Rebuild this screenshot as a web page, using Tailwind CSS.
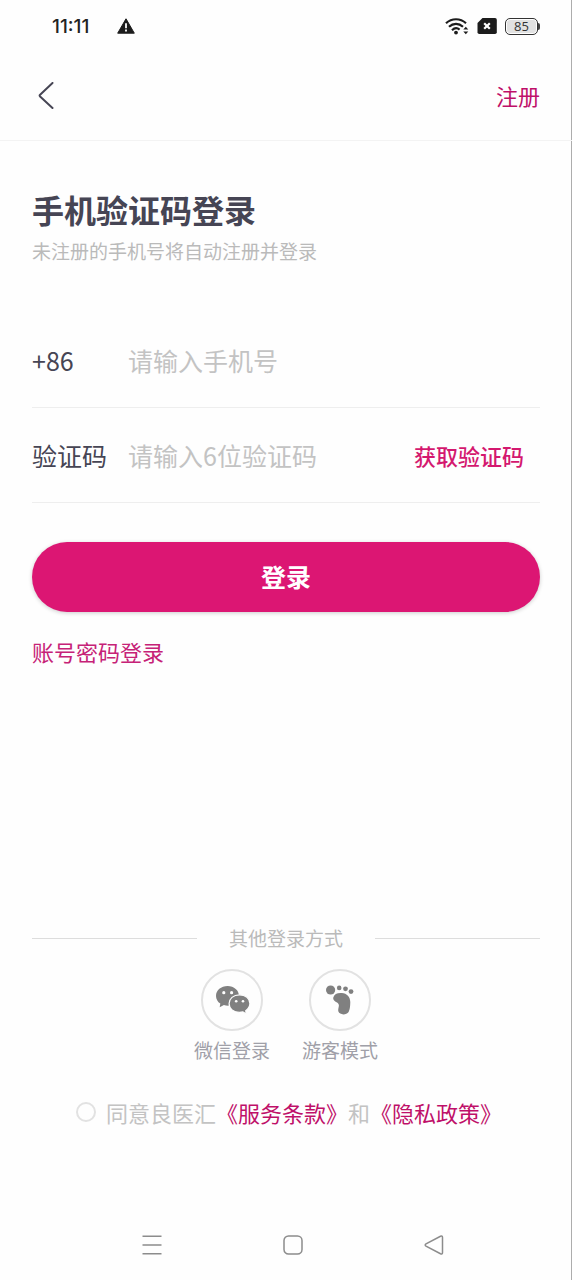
<!DOCTYPE html>
<html lang="zh-CN">
<head>
<meta charset="utf-8">
<meta name="viewport" content="width=device-width, initial-scale=1">
<title>手机验证码登录</title>
<script src="https://cdn.jsdelivr.net/npm/@tailwindcss/browser@4"></script>
</head>
<body class="flex min-h-screen flex-col bg-[#fefefe] font-['Noto_Sans_CJK_SC',sans-serif] text-[#464554] shadow-[inset_-1px_0_0_#adadad]">

  <!-- System status bar -->
  <div class="flex h-13 items-center justify-between pr-8 pl-13">
    <div class="flex items-center gap-7">
      <span class="pt-0.5 font-[Inter,sans-serif] text-[19px] leading-6 font-medium text-[#222222]">11:11</span>
      <svg class="h-4 w-[18px]" viewBox="0 0 18 16" role="img" aria-label="警告">
        <path d="M9 .8 17.3 15.2H.7Z" fill="#1c1c1c" stroke="#1c1c1c" stroke-linejoin="round"/>
        <path d="M9 5.2v5M9 11.6v1.8" stroke="#fff" stroke-width="1.8"/>
      </svg>
    </div>
    <div class="flex items-center gap-2">
      <svg class="h-[18px] w-6" viewBox="0 0 24 18" role="img" aria-label="Wi-Fi" fill="none" stroke="#1c1c1c" stroke-width="2.2">
        <path d="M1 6.2c5.800-5.300 14.200-5.300 20 0M4 9.800c4.200-3.900 9.800-3.900 14 0M7 13.200c2.400-2.300 5.200-2.500 7.600-.6"/>
        <circle cx="11" cy="15.600" r="1.900" fill="#1c1c1c" stroke="none"/>
        <path d="m18.300 12.500 2.500-2.800 2.500 2.800ZM18.300 14.500h5l-2.500 2.800Z" fill="#1c1c1c" stroke="none"/>
      </svg>
      <svg class="h-4 w-5" viewBox="0 0 20 16" role="img" aria-label="无 SIM 卡">
        <path d="M5.500 0H18a1.800 1.800 0 0 1 1.800 1.800v12.400A1.800 1.800 0 0 1 18 16H2.300A1.800 1.800 0 0 1 .5 14.200V5Z" fill="#1c1c1c"/>
        <path d="m7.200 5.200 5.600 5.600m0-5.600-5.600 5.600" stroke="#fff" stroke-width="2.200"/>
      </svg>
      <div class="flex items-center">
        <span class="flex h-[17px] w-[33px] items-center justify-center rounded-[5px] border border-[#333333] bg-[#e2e2e2] font-['Open_Sans',sans-serif] text-[13px] leading-none text-[#333333] ring-1 ring-white ring-inset">85</span>
        <span class="h-[7px] w-[2px] rounded-r-sm bg-[#444444]"></span>
      </div>
    </div>
  </div>

  <header class="flex h-[89px] items-center justify-between border-b border-[#f3f3f3] px-8">
    <button type="button" aria-label="返回" class="-ml-1 flex h-12 w-9 items-center justify-center">
      <svg class="h-7 w-5" viewBox="0 0 20 28" fill="none" stroke="#464554" stroke-width="2" stroke-linecap="round" stroke-linejoin="round"><path d="M16.500 1 4.100 12.700q-.9.900 0 1.800L16.500 26"/></svg>
    </button>
    <a href="#register" class="pb-0.5 text-[22px] leading-8 text-[#bf1069]">注册</a>
  </header>

  <main class="flex grow flex-col px-8 pt-12">
    <h1 class="text-[32px] leading-10 font-bold">手机验证码登录</h1>
    <p class="mt-1.5 text-[19px] leading-8 text-[#bababa]">未注册的手机号将自动注册并登录</p>

    <form class="mt-[46px]">
      <div class="flex h-[95px] items-center border-b border-[#eeeeee]">
        <label for="phone" class="w-24 shrink-0 text-[25px] leading-9">+86</label>
        <input id="phone" type="tel" placeholder="请输入手机号" class="h-12 min-w-0 grow bg-transparent text-[25px] outline-none placeholder:text-[#c3c3c3]">
      </div>
      <div class="flex h-[95px] items-center border-b border-[#eeeeee]">
        <label for="code" class="w-24 shrink-0 text-[25px] leading-9">验证码</label>
        <input id="code" type="text" inputmode="numeric" placeholder="请输入6位验证码" class="h-12 min-w-0 grow bg-transparent text-[25px] outline-none placeholder:text-[#c3c3c3]">
        <button type="button" class="shrink-0 px-4 text-[22px] leading-8 font-medium text-[#d4186f]">获取验证码</button>
      </div>
      <button type="submit" class="mt-[39px] flex h-[70px] w-full items-center justify-center rounded-full bg-[#dc1673] pb-0.5 text-[25px] leading-9 font-bold text-white shadow-[0_1px_4px_rgba(0,0,0,0.2)]">登录</button>
    </form>
    <a href="#password" class="mt-[23px] self-start text-[22px] leading-8 text-[#c62277]">账号密码登录</a>

    <section class="mt-auto">
      <div class="flex items-center gap-8">
        <span class="h-px grow bg-[#dddddd]"></span>
        <h2 class="text-[19px] leading-7 text-[#bababa]">其他登录方式</h2>
        <span class="h-px grow bg-[#dddddd]"></span>
      </div>
      <div class="mt-[17px] flex justify-center gap-8">
        <button type="button" class="flex flex-col items-center gap-[5px]">
          <span class="flex size-[62px] items-center justify-center rounded-full border-2 border-[#e2e2e2]">
            <svg class="h-[30px] w-9" viewBox="-1 0 36 30" fill="#808080">
              <path d="M12.600 1C6.100 1 1 5.300 1 10.900c0 3.200 1.700 5.900 4.300 7.700L4.700 22.300l4.200-2.200c1.200.4 2.600.6 4 .6C19.400 20.700 24 16.400 24 10.900S19 1 12.600 1Z"/>
              <path d="M24.500 9.800c-6.200 0-10.400 3.900-10.400 8.800s4.300 8.800 10.400 8.800c1.200 0 2.300-.2 3.400-.5l3.500 2-.7-3.200c2.400-1.700 4.200-4.200 4.200-7.100 0-4.900-4.400-8.800-10.400-8.800Z" stroke="#fefefe" stroke-width="1.200"/>
              <g fill="#fefefe"><circle cx="8.800" cy="7.700" r="1.600"/><circle cx="16.600" cy="7.700" r="1.600"/><circle cx="21.200" cy="16.200" r="1.300"/><circle cx="28" cy="16.200" r="1.300"/></g>
            </svg>
          </span>
          <span class="text-[19px] leading-7 text-[#a0a0a8]">微信登录</span>
        </button>
        <button type="button" class="flex flex-col items-center gap-[5px]">
          <span class="flex size-[62px] items-center justify-center rounded-full border-2 border-[#e2e2e2]">
            <svg class="h-[30px] w-7" viewBox="0 0 28 30" fill="#808080">
              <circle cx="4.600" cy="5" r="4.600"/><circle cx="13.200" cy="2.900" r="2.300"/><circle cx="19.500" cy="3.800" r="2.400"/><circle cx="25" cy="6.600" r="2.400"/>
              <path d="M7.300 12.500C8.300 9 11.500 7.600 15.800 8c5.200.5 8.600 3.800 8.500 9.300-.1 4.300-.5 7.500-1.700 9.600-2 3.400-9 3.300-10.200-.3-.8-2.600 1.100-5.100.3-7.200-1-2.400-6.300-2.900-5.400-6.900Z"/>
            </svg>
          </span>
          <span class="text-[19px] leading-7 text-[#a0a0a8]">游客模式</span>
        </button>
      </div>
    </section>
  </main>

  <div class="mt-8 flex items-center justify-center gap-2.5 pl-1.5 text-[22px] leading-8 whitespace-nowrap text-[#c3c3c3]">
    <input id="agree" type="checkbox" class="size-5 shrink-0 appearance-none rounded-full border-2 border-[#e2e2e2] checked:bg-[#dc1673]">
    <p><label for="agree">同意良医汇</label><a href="#terms" class="text-[#bf1069]">《服务条款》</a>和<a href="#privacy" class="text-[#bf1069]">《隐私政策》</a></p>
  </div>

  <!-- System navigation bar -->
  <nav aria-label="系统导航" class="mt-[82px] grid h-[70px] grid-cols-3 place-items-center pr-[67px] pl-[81px]">
    <button type="button" aria-label="最近任务"><svg class="size-5" viewBox="0 0 20 20" stroke="#8c8c8c" stroke-width="1.500"><path d="M.5 1.200h19M.5 10h19M.5 18.800h19"/></svg></button>
    <button type="button" aria-label="主屏幕"><svg class="size-5" viewBox="0 0 20 20" fill="none" stroke="#8c8c8c" stroke-width="1.500"><rect x="1" y="1" width="18" height="18" rx="4.500"/></svg></button>
    <button type="button" aria-label="返回上一级"><svg class="size-5" viewBox="0 0 20 20" fill="none" stroke="#8c8c8c" stroke-width="1.500"><path d="M2 8.900 16.500 1.300q2-.8 2 1.200v15q0 2-2 1.200L2 11.100q-1.600-1.100 0-2.200Z"/></svg></button>
  </nav>
</body>
</html>
